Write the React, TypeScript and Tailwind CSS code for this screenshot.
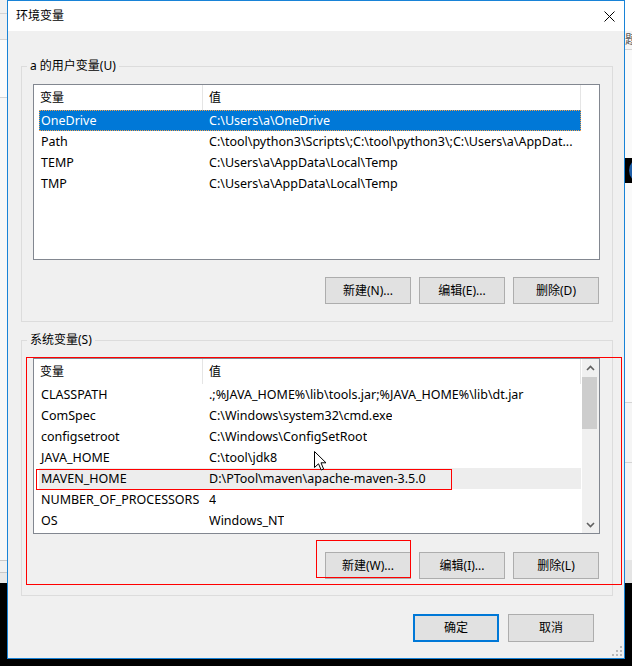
import React from 'react';
import clsx from 'clsx';

type EnvVar = { name: string; value: string };

const USER_VARS: EnvVar[] = [
  { name: 'OneDrive', value: 'C:\\Users\\a\\OneDrive' },
  { name: 'Path', value: 'C:\\tool\\python3\\Scripts\\;C:\\tool\\python3\\;C:\\Users\\a\\AppDat...' },
  { name: 'TEMP', value: 'C:\\Users\\a\\AppData\\Local\\Temp' },
  { name: 'TMP', value: 'C:\\Users\\a\\AppData\\Local\\Temp' },
];

const SYSTEM_VARS: EnvVar[] = [
  { name: 'CLASSPATH', value: '.;%JAVA_HOME%\\lib\\tools.jar;%JAVA_HOME%\\lib\\dt.jar' },
  { name: 'ComSpec', value: 'C:\\Windows\\system32\\cmd.exe' },
  { name: 'configsetroot', value: 'C:\\Windows\\ConfigSetRoot' },
  { name: 'JAVA_HOME', value: 'C:\\tool\\jdk8' },
  { name: 'MAVEN_HOME', value: 'D:\\PTool\\maven\\apache-maven-3.5.0' },
  { name: 'NUMBER_OF_PROCESSORS', value: '4' },
  { name: 'OS', value: 'Windows_NT' },
];

const Chevron = ({ up }: { up?: boolean }) => (
  <svg width="9" height="6" viewBox="0 0 9 6">
    <polyline
      points={up ? '1,5 4.5,1.5 8,5' : '1,1 4.5,4.5 8,1'}
      fill="none"
      stroke="#606060"
      strokeWidth="1.6"
    />
  </svg>
);

const ScrollBar = () => (
  <div className="flex w-[17px] shrink-0 flex-col bg-[#f0f0f0]">
    <div className="flex h-[17px] items-center justify-center">
      <Chevron up />
    </div>
    <div className="flex-1">
      <div className="mt-[1px] h-[52px] w-[15px] bg-[#cdcdcd]" />
    </div>
    <div className="flex h-[17px] items-center justify-center">
      <Chevron />
    </div>
  </div>
);

interface ListProps {
  rows: EnvVar[];
  selected?: number;
  hovered?: number;
  scrollbar?: boolean;
}

const ListView: React.FC<ListProps> = ({ rows, selected, hovered, scrollbar }) => (
  <div className="ml-[11px] flex h-[176px] w-[567px] border border-[#828790] bg-white">
    <div className="flex min-w-0 flex-1 flex-col overflow-hidden">
      <div className="flex h-[25px] shrink-0">
        <div className="flex w-[169px] items-center border-r border-[#e5e5e5] pl-[6px]">变量</div>
        <div className="flex w-[378px] items-center border-r border-[#e5e5e5] pl-[6px]">值</div>
      </div>
      {rows.map((r, i) => (
        <div
          key={r.name}
          className={clsx(
            'ml-[5px] flex h-[21px] w-[542px] shrink-0 items-center whitespace-nowrap pt-[1px] text-[12.5px]',
            i === selected && 'bg-[#0078d7] text-white outline-1 -outline-offset-1 outline-dotted outline-[#f5a04a]',
            i === hovered && 'bg-[#ededed]'
          )}
        >
          <div className="w-[170px] shrink-0 pl-[2px]">{r.name}</div>
          <div className="overflow-hidden">{r.value}</div>
        </div>
      ))}
    </div>
    {scrollbar && <ScrollBar />}
  </div>
);

const Btn = ({ children, primary }: { children: React.ReactNode; primary?: boolean }) => (
  <button
    type="button"
    className={clsx(
      'flex w-[86px] items-center justify-center bg-[#e1e1e1] text-black',
      primary ? 'h-[28px] border-2 border-[#0078d7]' : 'border border-[#adadad]'
    )}
  >
    {children}
  </button>
);

interface GroupProps {
  title: string;
  children: React.ReactNode;
  buttons: string[];
  gapTop: string;
  gapBottom: string;
}

const Group: React.FC<GroupProps> = ({ title, children, buttons, gapTop, gapBottom }) => (
  <fieldset className="ml-[13px] w-[592px] border border-[#dcdcdc]">
    <legend className="ml-[5px] px-[3px] leading-[16px]">{title}</legend>
    <div className="mt-[10px]">{children}</div>
    <div className={clsx('flex h-[27px] justify-end gap-[8px] pr-[13px]', gapTop, gapBottom)}>
      {buttons.map((b) => (
        <Btn key={b}>{b}</Btn>
      ))}
    </div>
  </fieldset>
);

const Cursor = () => (
  <svg width="13" height="20" viewBox="0 0 13 20" className="absolute left-[306px] top-[420px]">
    <path d="M0.5 0.5 L0.5 16.5 L4.5 12.8 L7.2 19 L9.6 18 L7 11.8 L12 11.8 Z" fill="#fff" stroke="#000" strokeWidth="1" />
  </svg>
);

const Grip = () => (
  <svg width="10" height="10" viewBox="0 0 10 10">
    {[
      [8, 0],
      [4, 4],
      [8, 4],
      [0, 8],
      [4, 8],
      [8, 8],
    ].map(([x, y]) => (
      <rect key={`${x}-${y}`} x={x} y={y} width="2" height="2" fill="#b9b9b9" />
    ))}
  </svg>
);

export default function App() {
  return (
    <div className="flex h-[666px] w-[632px] flex-col overflow-hidden bg-black font-['Noto_Sans','Noto_Sans_CJK_SC',sans-serif] text-[12px] text-black">
      <div className="flex h-[659px] shrink-0">
        {/* left edge of the window behind */}
        <div className="flex w-[7px] flex-col">
          <div className="h-[13px] bg-[#f0f0f0]" />
          <div className="h-[1px] bg-[#d4d4d4]" />
          <div className="h-[25px] bg-[#f0f0f0]" />
          <div className="h-[1px] bg-[#d4d4d4]" />
          <div className="h-[57px] bg-[#fbfbfb]" />
          <div className="h-[1px] bg-[#d4d4d4]" />
          <div className="h-[462px] bg-[#f7f7f7]" />
          <div className="h-[1px] bg-[#c8c8c8]" />
          <div className="h-[11px] bg-[#f0f0f0]" />
          <div className="h-[1px] bg-[#c8c8c8]" />
          <div className="h-[10px] bg-[#e8e8e8]" />
        </div>

        {/* dialog */}
        <div className="flex w-[618px] flex-col border border-[#1883d7]">
          <div className="flex h-[30px] shrink-0 items-center justify-between bg-white pl-[8px] pr-[9px]">
            <span>环境变量</span>
            <svg width="11" height="11" viewBox="0 0 11 11">
              <path d="M0.5 0.5 L10.5 10.5 M10.5 0.5 L0.5 10.5" stroke="#000" strokeWidth="1" />
            </svg>
          </div>

          <div className="relative flex flex-1 flex-col bg-[#f0f0f0] pt-[27px]">
            <Group
              title="a 的用户变量(U)"
              buttons={['新建(N)...', '编辑(E)...', '删除(D)']}
              gapTop="mt-[17px]"
              gapBottom="mb-[17px]"
            >
              <ListView rows={USER_VARS} selected={0} />
            </Group>

            <div className="h-[10px]" />

            <Group
              title="系统变量(S)"
              buttons={['新建(W)...', '编辑(I)...', '删除(L)']}
              gapTop="mt-[18px]"
              gapBottom="mb-[16px]"
            >
              <ListView rows={SYSTEM_VARS} hovered={4} scrollbar />
            </Group>

            <div className="mt-[18px] flex justify-end gap-[9px] pr-[30px]">
              <Btn primary>确定</Btn>
              <Btn>
                <span className="leading-[26px]">取消</span>
              </Btn>
            </div>

            <div className="mt-[4px] flex justify-end pr-[2px]">
              <Grip />
            </div>

            {/* red annotation boxes */}
            <div className="absolute left-[18px] top-[326px] h-[228px] w-[596px] border border-[#ff0000]" />
            <div className="absolute left-[28px] top-[438px] h-[21px] w-[416px] border border-[#ff0000]" />
            <div className="absolute left-[308px] top-[509px] h-[38px] w-[95px] border border-[#ff0000]" />
            <Cursor />
          </div>
        </div>

        {/* right edge of the window behind */}
        <div className="flex w-[7px] flex-col overflow-hidden">
          <div className="h-[31px] bg-white" />
          <div className="flex h-[18px] items-center overflow-hidden bg-[#f5f5f5] text-[#555]">
            <span className="whitespace-nowrap">题</span>
          </div>
          <div className="h-[1px] bg-[#d4d4d4]" />
          <div className="h-[108px] bg-[#fafafa]" />
          <div className="ml-[4px] h-[25px] w-[25px] shrink-0 rounded-full border-[3px] border-[#1f5fa8]" />
          <div className="h-[219px] bg-[#fafafa]" />
          <div className="h-[1px] bg-[#d4d4d4]" />
          <div className="h-[59px] bg-[#f5f5f5]" />
          <div className="h-[1px] bg-[#d4d4d4]" />
          <div className="h-[97px] bg-[#f5f5f5]" />
          <div className="h-[23px] bg-[#e4e4e4]" />
        </div>
      </div>
    </div>
  );
}
